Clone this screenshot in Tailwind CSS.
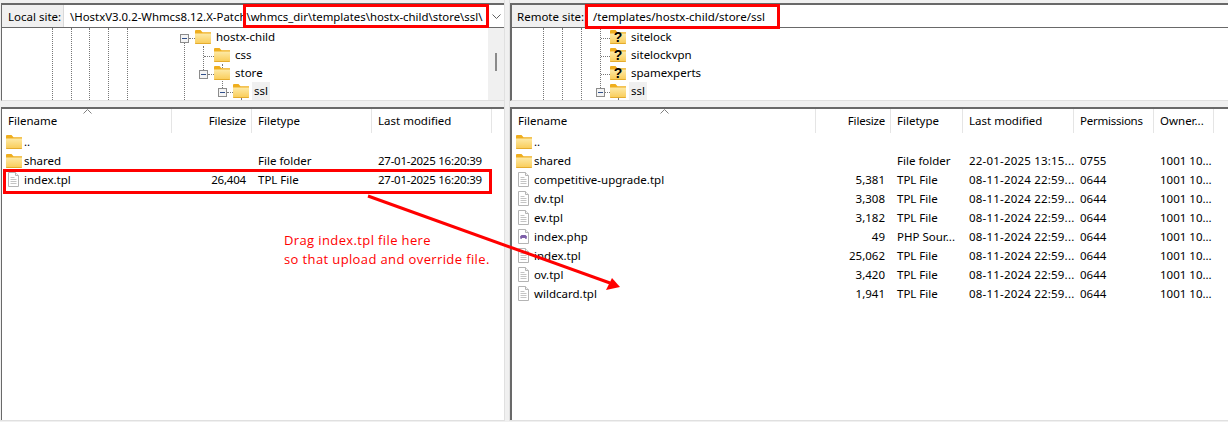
<!DOCTYPE html>
<html lang="en">
<head>
  <meta charset="UTF-8">
  <title>Site Manager</title>
  <script src="https://cdn.jsdelivr.net/npm/@tailwindcss/browser@4"></script>
</head>
<body class="bg-[#f0f0f0]">
  <!-- shared icons -->
  <svg width="0" height="0" class="absolute">
    <defs>
      <linearGradient id="folderFill" x1="0" y1="0" x2="0" y2="1">
        <stop offset="0" stop-color="#fdeaa8"/>
        <stop offset="1" stop-color="#f9cb55"/>
      </linearGradient>
      <symbol id="folder" viewBox="0 0 16 14">
        <path d="M0 1.2C0 .5.5 0 1.2 0h4.3l2 2.2H16V5H0z" fill="#efae1e"/>
        <path d="M0 3.4h16v9.4c0 .7-.5 1.2-1.2 1.2H1.2C.5 14 0 13.500 0 12.800z" fill="url(#folderFill)"/>
        <path d="M0 13h16v.2c0 .5-.4.800-.9.800H.9c-.5 0-.9-.3-.9-.8z" fill="#e5ac2e"/>
      </symbol>
      <symbol id="file" viewBox="0 0 11 15">
        <path d="M.5.5h7l3 3v11H.5z" fill="#fff" stroke="#b4b4b4"/>
        <path d="M7.500.5v3h3" fill="#f4f4f4" stroke="#b4b4b4"/>
        <path d="M2.500 5.500h4M2.500 7.500h6M2.500 9.500h6M2.500 11.500h6" stroke="#c4c4c4"/>
      </symbol>
      <symbol id="phpfile" viewBox="0 0 11 15">
        <path d="M.5.5h7l3 3v11H.5z" fill="#fff" stroke="#b4b4b4"/>
        <path d="M7.500.5v3h3" fill="#f4f4f4" stroke="#b4b4b4"/>
        <path d="M2 7.500L3.500 6h4L9 7.500 8.500 10h-1l-.5-1H4l-.5 1h-1z" fill="#7d5fa8"/>
      </symbol>
      <symbol id="minus" viewBox="0 0 9 9">
        <rect x=".5" y=".5" width="8" height="8" fill="#f4f4f4" stroke="#8c8c8c"/>
        <path d="M2 4.500h5" stroke="#2f4f8a"/>
      </symbol>
    </defs>
  </svg>

  <div class="relative flex w-[1228px] h-[422px] overflow-hidden bg-[#f0f0f0] text-black text-[11.5px] leading-[19px] whitespace-nowrap font-['Noto_Sans',sans-serif]">

    <!-- local pane -->
    <div class="flex flex-col w-[505px] h-[421px] pl-px pt-[3px] border-r border-b border-[#e0e0e0] shrink-0">
      <div class="flex flex-col border-l border-[#696969] border-b border-b-[#e0e0e0]">
        <div class="flex h-[25px] border-t-2 border-b border-[#696969]">
          <div class="flex items-center w-[62px] pl-[6px] bg-[#f0f0f0] border-r border-[#d9d9d9]">Local site:</div>
          <div class="flex items-center w-[424px] pl-[6px] bg-white overflow-hidden text-[11.4px]">\HostxV3.0.2-Whmcs8.12.X-Patch\whmcs_dir\templates\hostx-child\store\ssl\</div>
          <div class="flex items-center justify-center w-[16px] bg-white">
            <svg width="9" height="5" viewBox="0 0 9 5"><path d="M.5.5l4 4 4-4" fill="none" stroke="#606060"/></svg>
          </div>
        </div>
        <div class="flex h-[72px]">
          <div class="relative w-[486px] bg-white overflow-hidden">
            <div class="absolute top-0 bottom-0 left-[50px] border-l border-dotted border-[#777]"></div>
            <div class="absolute top-0 bottom-0 left-[69px] border-l border-dotted border-[#777]"></div>
            <div class="absolute top-0 bottom-0 left-[87px] border-l border-dotted border-[#777]"></div>
            <div class="absolute top-0 bottom-0 left-[106px] border-l border-dotted border-[#777]"></div>
            <div class="absolute top-0 bottom-0 left-[125px] border-l border-dotted border-[#777]"></div>
            <div class="absolute top-[14px] bottom-0 left-[182px] border-l border-dotted border-[#777]"></div>
            <div class="absolute top-[18px] h-[24px] left-[201px] border-l border-dotted border-[#777]"></div>
            <div class="absolute top-[36px] h-[24px] left-[220px] border-l border-dotted border-[#777]"></div>
            <div class="absolute top-[70px] h-[2px] left-[239px] border-l border-dotted border-[#777]"></div>
            <div class="absolute top-[10px] left-[187px] w-[6px] border-t border-dotted border-[#777]"></div>
            <div class="absolute top-[28px] left-[202px] w-[10px] border-t border-dotted border-[#777]"></div>
            <div class="absolute top-[46px] left-[206px] w-[6px] border-t border-dotted border-[#777]"></div>
            <div class="absolute top-[64px] left-[225px] w-[6px] border-t border-dotted border-[#777]"></div>
            <svg class="absolute top-[6px] left-[178px]" width="9" height="9"><use href="#minus"/></svg>
            <svg class="absolute top-[42px] left-[197px]" width="9" height="9"><use href="#minus"/></svg>
            <svg class="absolute top-[60px] left-[216px]" width="9" height="9"><use href="#minus"/></svg>
            <div class="relative flex items-center h-[18px] pl-[193px]"><svg width="16" height="14"><use href="#folder"/></svg><span class="ml-[3px] px-[2px] h-[18px] leading-[18px]">hostx-child</span></div>
            <div class="relative flex items-center h-[18px] pl-[212px]"><svg width="16" height="14"><use href="#folder"/></svg><span class="ml-[3px] px-[2px] h-[18px] leading-[18px]">css</span></div>
            <div class="relative flex items-center h-[18px] pl-[212px]"><svg width="16" height="14"><use href="#folder"/></svg><span class="ml-[3px] px-[2px] h-[18px] leading-[18px]">store</span></div>
            <div class="relative flex items-center h-[18px] pl-[231px]"><svg width="16" height="14"><use href="#folder"/></svg><span class="ml-[3px] px-[2px] h-[18px] leading-[18px] bg-[#f0f0f0]">ssl</span></div>
          </div>
          <div class="flex justify-center w-[16px] pt-[25px] bg-[#f0f0f0]">
            <div class="w-[2px] h-[18px] bg-[#8a8a8a]"></div>
          </div>
        </div>
      </div>
      <div class="relative flex-1 mt-[6px] bg-white border-l border-t-2 border-[#696969]">
        <svg class="absolute top-0 left-[81px]" width="9" height="5"><path d="M.5 4.500l4-4 4 4" fill="none" stroke="#808080"/></svg>
        <div class="grid grid-cols-[170px_80px_120px_120px] h-[24px] items-stretch">
          <div class="flex items-center px-[6px] pb-[2px] border-r border-[#e5e5e5]">Filename</div>
          <div class="flex items-center justify-end pl-[6px] pr-[5px] pb-[2px] tracking-[-0.2px] border-r border-[#e5e5e5]">Filesize</div>
          <div class="flex items-center px-[6px] pb-[2px] border-r border-[#e5e5e5]">Filetype</div>
          <div class="flex items-center px-[6px] pb-[2px] border-r border-[#e5e5e5]">Last modified</div>
        </div>
        <div class="grid grid-cols-[170px_80px_120px_120px] h-[19px] pb-[2px] leading-[17px] items-center">
          <div class="flex items-center pl-[4px]"><svg width="16" height="14"><use href="#folder"/></svg><span class="ml-[2px]">..</span></div>
        </div>
        <div class="grid grid-cols-[170px_80px_120px_120px] h-[19px] pb-[2px] leading-[17px] items-center">
          <div class="flex items-center pl-[4px]"><svg width="16" height="14"><use href="#folder"/></svg><span class="ml-[2px]">shared</span></div>
          <div></div>
          <div class="px-[6px]">File folder</div>
          <div class="px-[6px] tracking-[-0.25px]">27-01-2025 16:20:39</div>
        </div>
        <div class="grid grid-cols-[170px_80px_120px_120px] h-[19px] pb-[2px] leading-[17px] items-center">
          <div class="flex items-center pl-[6px]"><svg width="11" height="15" class="mr-[5px]"><use href="#file"/></svg>index.tpl</div>
          <div class="px-[6px] text-right tracking-[-0.2px]">26,404</div>
          <div class="px-[6px]">TPL File</div>
          <div class="px-[6px] tracking-[-0.25px]">27-01-2025 16:20:39</div>
        </div>
      </div>
    </div>

    <!-- remote pane -->
    <div class="flex flex-col flex-1 h-[421px] ml-[4px] pt-[3px] border-l border-b border-[#e0e0e0]">
      <div class="flex flex-col border-l-2 border-[#696969] border-b border-b-[#e0e0e0]">
        <div class="flex h-[25px] border-t-2 border-b border-[#696969]">
          <div class="flex items-center w-[73px] pl-[5px] bg-[#f0f0f0] border-r border-[#d9d9d9]">Remote site:</div>
          <div class="flex items-center flex-1 pl-[8px] bg-white">/templates/hostx-child/store/ssl</div>
        </div>
        <div class="relative h-[72px] bg-white overflow-hidden">
          <div class="absolute top-0 bottom-0 left-[31px] border-l border-dotted border-[#777]"></div>
          <div class="absolute top-0 bottom-0 left-[50px] border-l border-dotted border-[#777]"></div>
          <div class="absolute top-0 bottom-0 left-[69px] border-l border-dotted border-[#777]"></div>
          <div class="absolute top-0 h-[60px] left-[88px] border-l border-dotted border-[#777]"></div>
          <div class="absolute top-[70px] h-[2px] left-[106px] border-l border-dotted border-[#777]"></div>
          <div class="absolute top-[10px] left-[89px] w-[9px] border-t border-dotted border-[#777]"></div>
          <div class="absolute top-[28px] left-[89px] w-[9px] border-t border-dotted border-[#777]"></div>
          <div class="absolute top-[46px] left-[89px] w-[9px] border-t border-dotted border-[#777]"></div>
          <div class="absolute top-[64px] left-[93px] w-[5px] border-t border-dotted border-[#777]"></div>
          <svg class="absolute top-[60px] left-[84px]" width="9" height="9"><use href="#minus"/></svg>
          <div class="relative flex items-center h-[18px] pl-[98px]">
            <div class="relative w-[16px] h-[14px]"><svg width="16" height="14"><use href="#folder"/></svg><span class="absolute inset-0 text-center text-[14px] leading-[15px] font-bold font-['Liberation_Sans',sans-serif]">?</span></div>
            <span class="ml-[3px] px-[2px] h-[18px] leading-[18px]">sitelock</span>
          </div>
          <div class="relative flex items-center h-[18px] pl-[98px]">
            <div class="relative w-[16px] h-[14px]"><svg width="16" height="14"><use href="#folder"/></svg><span class="absolute inset-0 text-center text-[14px] leading-[15px] font-bold font-['Liberation_Sans',sans-serif]">?</span></div>
            <span class="ml-[3px] px-[2px] h-[18px] leading-[18px]">sitelockvpn</span>
          </div>
          <div class="relative flex items-center h-[18px] pl-[98px]">
            <div class="relative w-[16px] h-[14px]"><svg width="16" height="14"><use href="#folder"/></svg><span class="absolute inset-0 text-center text-[14px] leading-[15px] font-bold font-['Liberation_Sans',sans-serif]">?</span></div>
            <span class="ml-[3px] px-[2px] h-[18px] leading-[18px]">spamexperts</span>
          </div>
          <div class="relative flex items-center h-[18px] pl-[98px]"><svg width="16" height="14"><use href="#folder"/></svg><span class="ml-[3px] px-[2px] h-[18px] leading-[18px] bg-[#f0f0f0]">ssl</span></div>
        </div>
      </div>
      <div class="relative flex-1 mt-[6px] bg-white border-l-2 border-t-2 border-[#696969]">
        <svg class="absolute top-0 left-[148px]" width="9" height="5"><path d="M.5 4.500l4-4 4 4" fill="none" stroke="#808080"/></svg>
        <div class="grid grid-cols-[304px_75px_72px_111px_80px_60px] h-[24px] items-stretch">
          <div class="flex items-center px-[6px] pb-[2px] border-r border-[#e5e5e5]">Filename</div>
          <div class="flex items-center justify-end pl-[6px] pr-[5px] pb-[2px] tracking-[-0.2px] border-r border-[#e5e5e5]">Filesize</div>
          <div class="flex items-center px-[6px] pb-[2px] border-r border-[#e5e5e5]">Filetype</div>
          <div class="flex items-center px-[6px] pb-[2px] border-r border-[#e5e5e5]">Last modified</div>
          <div class="flex items-center px-[6px] pb-[2px] tracking-[-0.25px] border-r border-[#e5e5e5]">Permissions</div>
          <div class="flex items-center px-[6px] pb-[2px] border-r border-[#e5e5e5]">Owner...</div>
        </div>
        <div class="grid grid-cols-[304px_75px_72px_111px_80px_60px] h-[19px] pb-[2px] leading-[17px] items-center">
          <div class="flex items-center pl-[4px]"><svg width="16" height="14"><use href="#folder"/></svg><span class="ml-[2px]">..</span></div>
        </div>
        <div class="grid grid-cols-[304px_75px_72px_111px_80px_60px] h-[19px] pb-[2px] leading-[17px] items-center">
          <div class="flex items-center pl-[4px]"><svg width="16" height="14"><use href="#folder"/></svg><span class="ml-[2px]">shared</span></div>
          <div></div>
          <div class="px-[6px]">File folder</div>
          <div class="px-[6px] tracking-[0.2px]">22-01-2025 13:15...</div>
          <div class="px-[6px]">0755</div>
          <div class="px-[6px]">1001 10...</div>
        </div>
        <div class="grid grid-cols-[304px_75px_72px_111px_80px_60px] h-[19px] pb-[2px] leading-[17px] items-center">
          <div class="flex items-center pl-[6px]"><svg width="11" height="15" class="mr-[5px]"><use href="#file"/></svg>competitive-upgrade.tpl</div>
          <div class="px-[6px] text-right">5,381</div>
          <div class="px-[6px]">TPL File</div>
          <div class="px-[6px] tracking-[0.2px]">08-11-2024 22:59...</div>
          <div class="px-[6px]">0644</div>
          <div class="px-[6px]">1001 10...</div>
        </div>
        <div class="grid grid-cols-[304px_75px_72px_111px_80px_60px] h-[19px] pb-[2px] leading-[17px] items-center">
          <div class="flex items-center pl-[6px]"><svg width="11" height="15" class="mr-[5px]"><use href="#file"/></svg>dv.tpl</div>
          <div class="px-[6px] text-right">3,308</div>
          <div class="px-[6px]">TPL File</div>
          <div class="px-[6px] tracking-[0.2px]">08-11-2024 22:59...</div>
          <div class="px-[6px]">0644</div>
          <div class="px-[6px]">1001 10...</div>
        </div>
        <div class="grid grid-cols-[304px_75px_72px_111px_80px_60px] h-[19px] pb-[2px] leading-[17px] items-center">
          <div class="flex items-center pl-[6px]"><svg width="11" height="15" class="mr-[5px]"><use href="#file"/></svg>ev.tpl</div>
          <div class="px-[6px] text-right">3,182</div>
          <div class="px-[6px]">TPL File</div>
          <div class="px-[6px] tracking-[0.2px]">08-11-2024 22:59...</div>
          <div class="px-[6px]">0644</div>
          <div class="px-[6px]">1001 10...</div>
        </div>
        <div class="grid grid-cols-[304px_75px_72px_111px_80px_60px] h-[19px] pb-[2px] leading-[17px] items-center">
          <div class="flex items-center pl-[6px]"><svg width="11" height="15" class="mr-[5px]"><use href="#phpfile"/></svg>index.php</div>
          <div class="px-[6px] text-right">49</div>
          <div class="px-[6px]">PHP Sour...</div>
          <div class="px-[6px] tracking-[0.2px]">08-11-2024 22:59...</div>
          <div class="px-[6px]">0644</div>
          <div class="px-[6px]">1001 10...</div>
        </div>
        <div class="grid grid-cols-[304px_75px_72px_111px_80px_60px] h-[19px] pb-[2px] leading-[17px] items-center">
          <div class="flex items-center pl-[6px]"><svg width="11" height="15" class="mr-[5px]"><use href="#file"/></svg>index.tpl</div>
          <div class="px-[6px] text-right">25,062</div>
          <div class="px-[6px]">TPL File</div>
          <div class="px-[6px] tracking-[0.2px]">08-11-2024 22:59...</div>
          <div class="px-[6px]">0644</div>
          <div class="px-[6px]">1001 10...</div>
        </div>
        <div class="grid grid-cols-[304px_75px_72px_111px_80px_60px] h-[19px] pb-[2px] leading-[17px] items-center">
          <div class="flex items-center pl-[6px]"><svg width="11" height="15" class="mr-[5px]"><use href="#file"/></svg>ov.tpl</div>
          <div class="px-[6px] text-right">3,420</div>
          <div class="px-[6px]">TPL File</div>
          <div class="px-[6px] tracking-[0.2px]">08-11-2024 22:59...</div>
          <div class="px-[6px]">0644</div>
          <div class="px-[6px]">1001 10...</div>
        </div>
        <div class="grid grid-cols-[304px_75px_72px_111px_80px_60px] h-[19px] pb-[2px] leading-[17px] items-center">
          <div class="flex items-center pl-[6px]"><svg width="11" height="15" class="mr-[5px]"><use href="#file"/></svg>wildcard.tpl</div>
          <div class="px-[6px] text-right">1,941</div>
          <div class="px-[6px]">TPL File</div>
          <div class="px-[6px] tracking-[0.2px]">08-11-2024 22:59...</div>
          <div class="px-[6px]">0644</div>
          <div class="px-[6px]">1001 10...</div>
        </div>
      </div>
    </div>

    <!-- red annotations drawn on top of the screenshot -->
    <div class="absolute left-[243px] top-[4px] w-[246px] h-[24px] border-[3px] border-[#ff0000]"></div>
    <div class="absolute left-[585px] top-[4px] w-[195px] h-[25px] border-[3px] border-[#ff0000]"></div>
    <div class="absolute left-[3px] top-[169px] w-[489px] h-[25px] border-[3px] border-[#ff0000]"></div>
    <svg class="absolute inset-0" width="1228" height="422">
      <path d="M368 196L610 283" stroke="#ff0000" stroke-width="3" fill="none"/>
      <path d="M620 287L612 278 606 290z" fill="#ff0000"/>
    </svg>
    <div class="absolute left-[284px] top-[231px] text-[#ff0000] text-[13px] leading-[19px] tracking-[0.38px] font-['Open_Sans',sans-serif]">Drag index.tpl file here<br>so that upload and override file.</div>
  </div>
</body>
</html>
